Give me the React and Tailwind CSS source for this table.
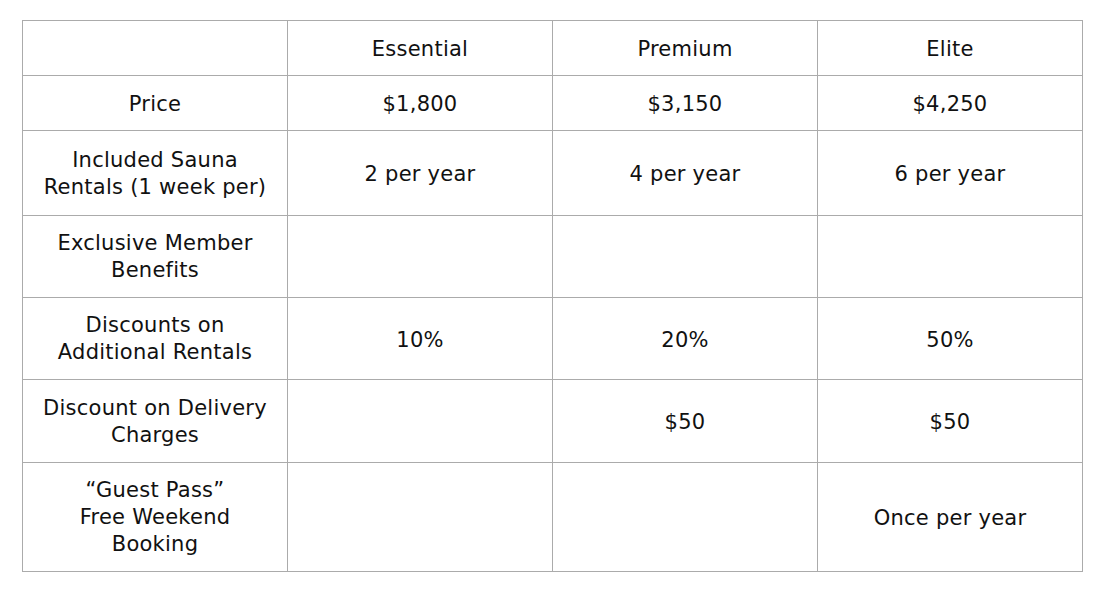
export default function App() {
  const rows = [
    { h: "h-[54px]", cells: ["", "Essential", "Premium", "Elite"] },
    { h: "h-[54px]", cells: ["Price", "$1,800", "$3,150", "$4,250"] },
    { h: "h-[84px]", cells: [["Included Sauna", "Rentals (1 week per)"], "2 per year", "4 per year", "6 per year"] },
    { h: "h-[81px]", cells: [["Exclusive Member", "Benefits"], "", "", ""] },
    { h: "h-[81px]", cells: [["Discounts on", "Additional Rentals"], "10%", "20%", "50%"] },
    { h: "h-[82px]", cells: [["Discount on Delivery", "Charges"], "", "$50", "$50"] },
    { h: "h-[108px]", cells: [["\u201cGuest Pass\u201d", "Free Weekend", "Booking"], "", "", "Once per year"] },
  ];
  return (
    <div className="w-[1106px] h-[595px] bg-white pt-[20px] pl-[22px]" style={{ fontFamily: "'DejaVu Sans', Inter, sans-serif" }}>
      <div className="grid grid-cols-[264px_264px_264px_264px] gap-px p-px bg-[#ababab] w-[1061px]">
        {rows.map((r, i) =>
          r.cells.map((c, j) => (
            <div
              key={i + "-" + j}
              className={`${r.h} ${Array.isArray(c) ? "pt-px" : "pt-[3px]"} bg-white flex flex-col items-center justify-center text-center text-[21px] leading-[27px] tracking-[0.25px] text-[#111]`}
            >
              {Array.isArray(c) ? c.map((l, k) => <span key={k}>{l}</span>) : c}
            </div>
          ))
        )}
      </div>
    </div>
  );
}
